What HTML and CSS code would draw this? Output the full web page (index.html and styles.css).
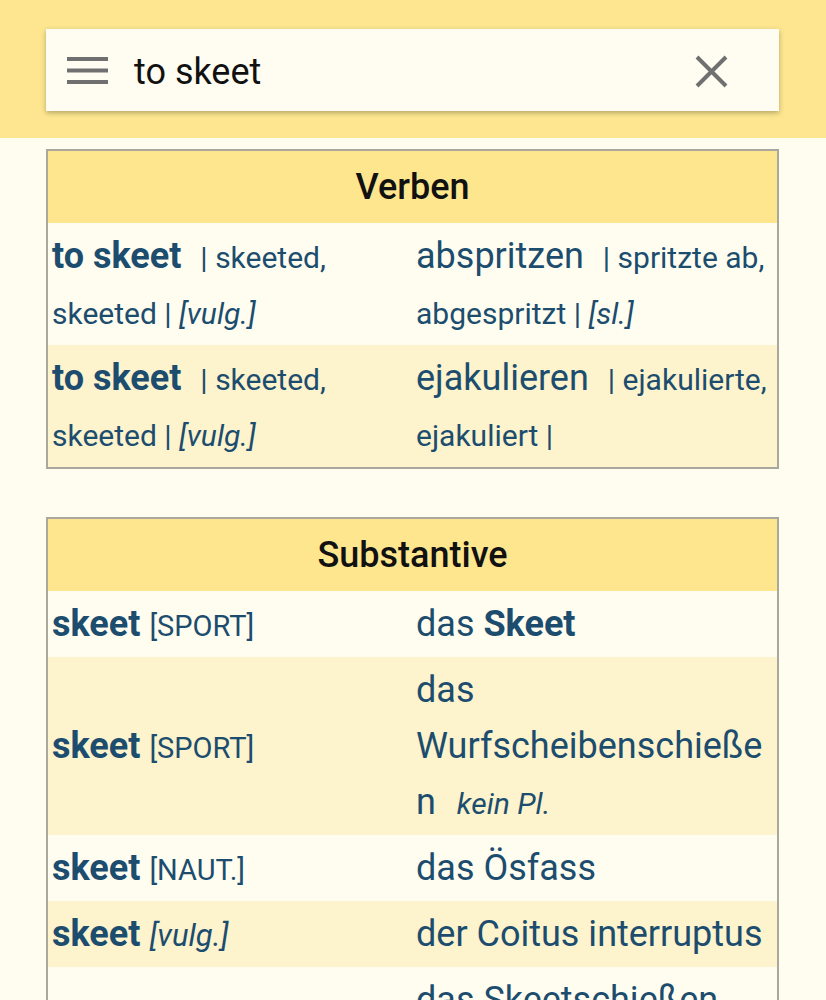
FILE: index.html
```html
<!DOCTYPE html>
<html lang="de">
<head>
<meta charset="utf-8">
<title>to skeet</title>
<link rel="stylesheet" href="styles.css">
</head>
<body>
<header class="topbar">
  <div class="search">
    <svg class="menu" width="41" height="28" viewBox="0 0 41 28" aria-hidden="true">
      <rect x="0" y="0" width="41" height="4" fill="#707070"/>
      <rect x="0" y="11.5" width="41" height="4" fill="#707070"/>
      <rect x="0" y="23" width="41" height="4" fill="#707070"/>
    </svg>
    <span class="query">to skeet</span>
    <svg class="clear" width="33" height="33" viewBox="0 0 33 33" aria-hidden="true">
      <path d="M2 2 L31 31 M31 2 L2 31" stroke="#707070" stroke-width="4" fill="none"/>
    </svg>
  </div>
</header>
<main class="results">
  <section class="group">
    <h2 class="group-title">Verben</h2>
    <div class="row">
      <div class="cell en"><b>to skeet</b> <span class="gram">| skeeted, skeeted | <i>[vulg.]</i></span></div>
      <div class="cell de">abspritzen <span class="gram">| spritzte ab, abgespritzt | <i>[sl.]</i></span></div>
    </div>
    <div class="row alt">
      <div class="cell en"><b>to skeet</b> <span class="gram">| skeeted, skeeted | <i>[vulg.]</i></span></div>
      <div class="cell de">ejakulieren <span class="gram">| ejakulierte, ejakuliert |</span></div>
    </div>
  </section>
  <section class="group">
    <h2 class="group-title">Substantive</h2>
    <div class="row">
      <div class="cell en"><b>skeet</b> <span class="tag">[SPORT]</span></div>
      <div class="cell de">das <b>Skeet</b></div>
    </div>
    <div class="row alt">
      <div class="cell en"><b>skeet</b> <span class="tag">[SPORT]</span></div>
      <div class="cell de">das Wurfscheibenschießen <i class="note">kein Pl.</i></div>
    </div>
    <div class="row">
      <div class="cell en"><b>skeet</b> <span class="tag">[NAUT.]</span></div>
      <div class="cell de">das Ösfass</div>
    </div>
    <div class="row alt">
      <div class="cell en"><b>skeet</b> <i class="tag">[vulg.]</i></div>
      <div class="cell de">der Coitus interruptus</div>
    </div>
    <div class="row">
      <div class="cell en"><b>skeet shooting</b></div>
      <div class="cell de">das Skeetschießen <i class="note">kein Pl.</i></div>
    </div>
  </section>
</main>
</body>
</html>
```

FILE: styles.css
```css
html, body {
  margin: 0;
  padding: 0;
}

body {
  background: #fffdf0;
  font-family: Roboto, "Noto Sans", "Liberation Sans", sans-serif;
  color: #1c4d6e;
}

.topbar {
  background: #fde68f;
  height: 138px;
  box-sizing: border-box;
  padding: 29px 47px 0 46px;
}

.search {
  height: 82px;
  background: #fffdf2;
  box-shadow: 0 2px 5px rgba(0, 0, 0, 0.28);
  display: flex;
  align-items: center;
  padding: 0 51px 0 21px;
}

.menu {
  flex: none;
  margin-top: 2px;
}

.query {
  flex: 1;
  margin-left: 26px;
  margin-top: 3px;
  font-size: 36px;
  color: #111;
}

.clear {
  flex: none;
  margin-top: 2px;
}

.results {
  padding: 11px 47px 40px 46px;
  display: flex;
  flex-direction: column;
  gap: 48px;
}

.group {
  border: 2px solid #a9a79e;
}

.group-title {
  margin: 0;
  height: 72px;
  line-height: 72px;
  text-align: center;
  font-size: 36px;
  font-weight: 500;
  color: #111;
  background: #fde68e;
}

.row {
  display: grid;
  grid-template-columns: 364px 1fr;
  align-items: center;
  padding: 5px 0;
  font-size: 36px;
  line-height: 56px;
  background: #fffdf0;
}

.row.alt {
  background: #fdf3cd;
}

.cell {
  overflow-wrap: break-word;
  min-width: 0;
}

.en {
  padding-left: 4px;
}

.de {
  padding-left: 4px;
}

.cell b {
  font-weight: 700;
}

.gram {
  font-size: 30px;
  line-height: 1;
  margin-left: 10px;
}

.tag {
  font-size: 29px;
  line-height: 1;
}

i.tag {
  font-size: 31px;
}

.note {
  font-size: 30px;
  line-height: 1;
  margin-left: 12px;
}
```
